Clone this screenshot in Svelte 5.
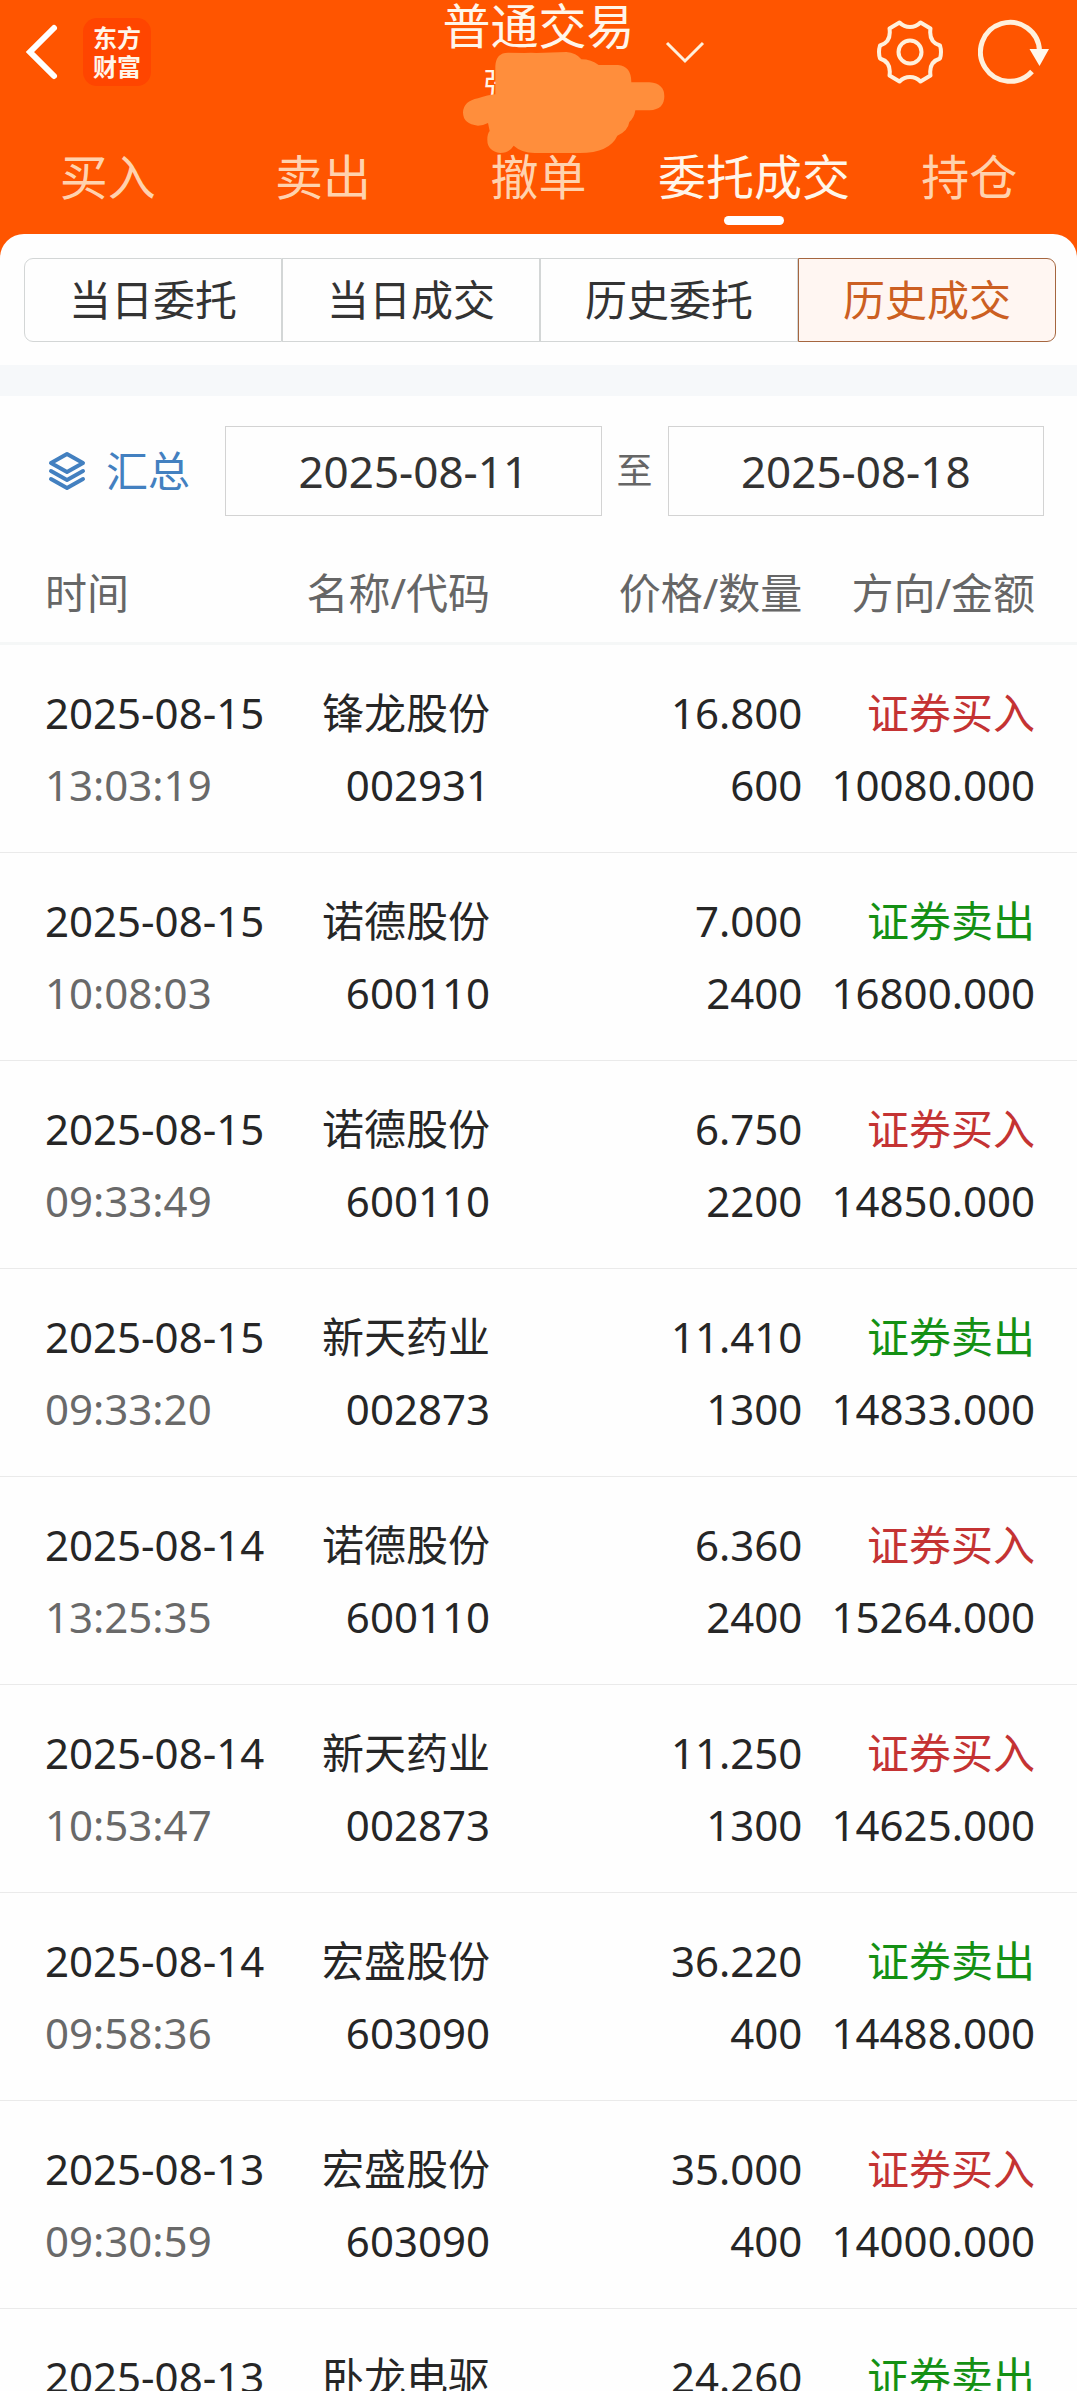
<script>
  const tabs = ['买入', '卖出', '撤单', '委托成交', '持仓'];
  const views = ['当日委托', '当日成交', '历史委托', '历史成交'];

  let activeTab = $state('委托成交');
  let activeView = $state('历史成交');
  let startDate = $state('2025-08-11');
  let endDate = $state('2025-08-18');

  const trades = [
    { date: '2025-08-15', time: '13:03:19', name: '锋龙股份', code: '002931', price: '16.800', qty: '600', side: 'buy', amount: '10080.000' },
    { date: '2025-08-15', time: '10:08:03', name: '诺德股份', code: '600110', price: '7.000', qty: '2400', side: 'sell', amount: '16800.000' },
    { date: '2025-08-15', time: '09:33:49', name: '诺德股份', code: '600110', price: '6.750', qty: '2200', side: 'buy', amount: '14850.000' },
    { date: '2025-08-15', time: '09:33:20', name: '新天药业', code: '002873', price: '11.410', qty: '1300', side: 'sell', amount: '14833.000' },
    { date: '2025-08-14', time: '13:25:35', name: '诺德股份', code: '600110', price: '6.360', qty: '2400', side: 'buy', amount: '15264.000' },
    { date: '2025-08-14', time: '10:53:47', name: '新天药业', code: '002873', price: '11.250', qty: '1300', side: 'buy', amount: '14625.000' },
    { date: '2025-08-14', time: '09:58:36', name: '宏盛股份', code: '603090', price: '36.220', qty: '400', side: 'sell', amount: '14488.000' },
    { date: '2025-08-13', time: '09:30:59', name: '宏盛股份', code: '603090', price: '35.000', qty: '400', side: 'buy', amount: '14000.000' },
    { date: '2025-08-13', name: '卧龙电驱', price: '24.260', side: 'sell' }
  ];
  const sideLabel = { buy: '证券买入', sell: '证券卖出' };
</script>

<div class="app">
  <header>
    <div class="topbar">
      <div class="left">
        <button class="icon" aria-label="返回">
          <svg width="38" height="60" viewBox="0 0 38 60" fill="none" stroke="#fff" stroke-width="6" stroke-linecap="round" stroke-linejoin="miter">
            <path d="M33 6 9 30l24 24" />
          </svg>
        </button>
        <div class="logo"><span>东方</span><span>财富</span></div>
      </div>
      <div class="account">
        <h1>普通交易</h1>
        <p>张</p>
        <svg class="mask" width="202" height="102" viewBox="0 0 606 306" fill="#ff8e3c" aria-hidden="true">
          <path d="M97 45Q99 5 135 5L185 6Q205 4 220 6L310 3Q340 5 355 25Q385 25 407 42L465 42Q505 45 505 94L560 94Q604 98 604 136Q604 176 560 178L517 178Q514 200 499 213Q495 240 463 254Q440 305 350 306L215 306Q175 305 152 284Q138 306 112 306Q72 300 73 265Q73 248 80 240L75 216Q60 224 45 224Q0 220 0 184Q2 150 45 142Q75 132 97 130Z" />
        </svg>
      </div>
      <div class="right">
        <button class="icon" aria-label="切换账户">
          <svg width="40" height="24" viewBox="0 0 40 24" fill="none" stroke="#fff0dc" stroke-width="3">
            <path d="M2 3 20 21 38 3" />
          </svg>
        </button>
        <div class="tools">
          <button class="icon" aria-label="设置">
            <svg width="68" height="68" viewBox="0 0 68 68" fill="none" stroke="#fff0dc" stroke-width="4" stroke-linejoin="round">
              <path d="M23.5 4.5Q28 9 34 9T44.500 4.500L54.500 10.500Q52.500 24 64 27.500Q66 34 64 40.500Q52.500 44 54.500 57.500L44.500 63.500Q40 59 34 59T23.500 63.500L13.500 57.500Q15.500 44 4 40.500Q2 34 4 27.500Q15.500 24 13.500 10.500Z" />
              <circle cx="34" cy="34" r="11.500" />
            </svg>
          </button>
          <button class="icon" aria-label="刷新">
            <svg width="72" height="68" viewBox="0 0 72 68" fill="none">
              <path d="M61.500 33A29.500 29.500 0 1 0 54 53.500" stroke="#fff0dc" stroke-width="5" />
              <path d="M51.500 31H71L61.500 48Z" fill="#fff8ee" />
            </svg>
          </button>
        </div>
      </div>
    </div>
    <nav class="tabs">
      {#each tabs as tab}
        <button class:active={tab === activeTab} onclick={() => (activeTab = tab)}>{tab}</button>
      {/each}
    </nav>
  </header>

  <main>
    <div class="views">
      {#each views as view}
        <button class:active={view === activeView} onclick={() => (activeView = view)}>{view}</button>
      {/each}
    </div>
    <div class="band"></div>
    <div class="filter">
      <button class="summary">
        <svg width="38" height="40" viewBox="0 0 38 40" fill="none" stroke="#4380c0" stroke-width="4" stroke-linecap="round" stroke-linejoin="round">
          <path d="M19 3 35 12 19 21 3 12Z" />
          <path d="M3 20 19 29 35 20" />
          <path d="M3 28 19 37 35 28" />
        </svg>
        汇总
      </button>
      <input type="text" aria-label="开始日期" bind:value={startDate} />
      <span class="to">至</span>
      <input type="text" aria-label="结束日期" bind:value={endDate} />
    </div>
    <div class="list">
      <table>
        <thead>
          <tr>
            <th class="c-time">时间</th>
            <th class="c-name">名称/代码</th>
            <th class="c-price">价格/数量</th>
            <th class="c-side">方向/金额</th>
          </tr>
        </thead>
        <tbody>
          {#each trades as t}
            <tr>
              <td><div>{t.date}</div>{#if t.time}<div class="muted">{t.time}</div>{/if}</td>
              <td><div>{t.name}</div>{#if t.code}<div>{t.code}</div>{/if}</td>
              <td><div>{t.price}</div>{#if t.qty}<div>{t.qty}</div>{/if}</td>
              <td><div class={t.side}>{sideLabel[t.side]}</div>{#if t.amount}<div>{t.amount}</div>{/if}</td>
            </tr>
          {/each}
        </tbody>
      </table>
    </div>
  </main>
</div>

<style>
  :global(body) {
    margin: 0;
  }
  .app {
    display: flex;
    flex-direction: column;
    height: 100vh;
    overflow: hidden;
    background: #ff5500;
    color: #262626;
    font-family: 'Noto Sans', 'Noto Sans CJK SC', sans-serif;
    font-size: 42px;
  }
  button,
  input {
    margin: 0;
    padding: 0;
    border: 0;
    border-radius: 0;
    background: none;
    color: inherit;
    font: inherit;
  }
  button {
    cursor: pointer;
  }
  svg {
    display: block;
  }

  header {
    flex: none;
    padding-bottom: 9px;
    color: #fff6ea;
  }
  .topbar {
    display: grid;
    grid-template-columns: 1fr auto 1fr;
    height: 138px;
  }
  .left,
  .right {
    display: flex;
    align-items: center;
    height: 104px;
  }
  .left {
    gap: 24px;
    padding-left: 21px;
  }
  .logo {
    display: flex;
    flex-direction: column;
    align-items: center;
    justify-content: center;
    width: 68px;
    height: 68px;
    border-radius: 14px;
    background: #ff4500;
    font-size: 24px;
    font-weight: 700;
    line-height: 29px;
  }
  .account {
    position: relative;
  }
  h1 {
    margin: 0;
    font-size: 48px;
    font-weight: 400;
    line-height: 52px;
  }
  .account p {
    margin: 16px 0 0;
    padding-left: 40px;
    font-size: 32px;
    line-height: 32px;
  }
  .mask {
    position: absolute;
    top: 51px;
    left: 21px;
  }
  .right {
    justify-content: space-between;
    padding: 0 27px 0 30px;
  }
  .tools {
    display: flex;
    gap: 34px;
  }
  .tabs {
    display: grid;
    grid-template-columns: repeat(5, 1fr);
  }
  .tabs button {
    display: flex;
    flex-direction: column;
    align-items: center;
    color: #ffd2ae;
    font-size: 48px;
    line-height: 78px;
    white-space: nowrap;
  }
  .tabs button::after {
    content: '';
    width: 60px;
    height: 9px;
    border-radius: 5px;
  }
  .tabs .active {
    color: #fff6ea;
  }
  .tabs .active::after {
    background: #fff;
  }

  main {
    display: flex;
    flex: 1;
    flex-direction: column;
    min-height: 0;
    border-radius: 24px 24px 0 0;
    background: #fefefe;
  }
  .views {
    display: flex;
    padding: 24px 21px 23px 24px;
  }
  .views button {
    flex: 1;
    box-sizing: border-box;
    height: 84px;
    border: 1px solid #d3d6d6;
    color: #333;
    line-height: 72px;
  }
  .views button:first-child {
    border-radius: 9px 0 0 9px;
  }
  .views button:last-child {
    border-radius: 0 9px 9px 0;
  }
  .views .active {
    border-color: #a5663f;
    background: #fff6f2;
    color: #cc5f22;
  }
  .band {
    flex: none;
    height: 31px;
    background: #f6f8fa;
  }
  .filter {
    display: flex;
    align-items: center;
    padding: 30px 33px 0 48px;
  }
  .summary {
    display: flex;
    align-items: center;
    gap: 20px;
    width: 177px;
    color: #4380c0;
    line-height: 72px;
  }
  .filter input {
    flex: 1;
    box-sizing: border-box;
    min-width: 0;
    height: 90px;
    border: 1px solid #d3d3d3;
    color: #333;
    font-size: 44px;
    text-align: center;
  }
  .to {
    width: 66px;
    color: #666;
    font-size: 36px;
    line-height: 72px;
    text-align: center;
  }

  .list {
    flex: 1;
    min-height: 0;
    overflow-y: auto;
    scrollbar-width: none;
  }
  table {
    width: 100%;
    border-collapse: separate;
    border-spacing: 0;
    table-layout: fixed;
    line-height: 72px;
  }
  th,
  td {
    box-sizing: border-box;
    text-align: right;
    white-space: nowrap;
  }
  .c-time {
    width: 28%;
  }
  .c-name {
    width: 17.5%;
  }
  .c-price {
    width: 29%;
  }
  .c-side {
    width: 25.5%;
  }
  th {
    padding: 41px 0 13px;
    border-bottom: 3px solid #f5f7f7;
    color: #666;
    font-weight: 400;
  }
  td {
    padding: 32px 0 31px;
    border-bottom: 1px solid #eaeaea;
    vertical-align: top;
  }
  th:first-child,
  td:first-child {
    padding-left: 45px;
    text-align: left;
  }
  th:last-child,
  td:last-child {
    padding-right: 42px;
  }
  .muted {
    color: #696969;
  }
  .buy {
    color: #c43333;
  }
  .sell {
    color: #149014;
  }
</style>
